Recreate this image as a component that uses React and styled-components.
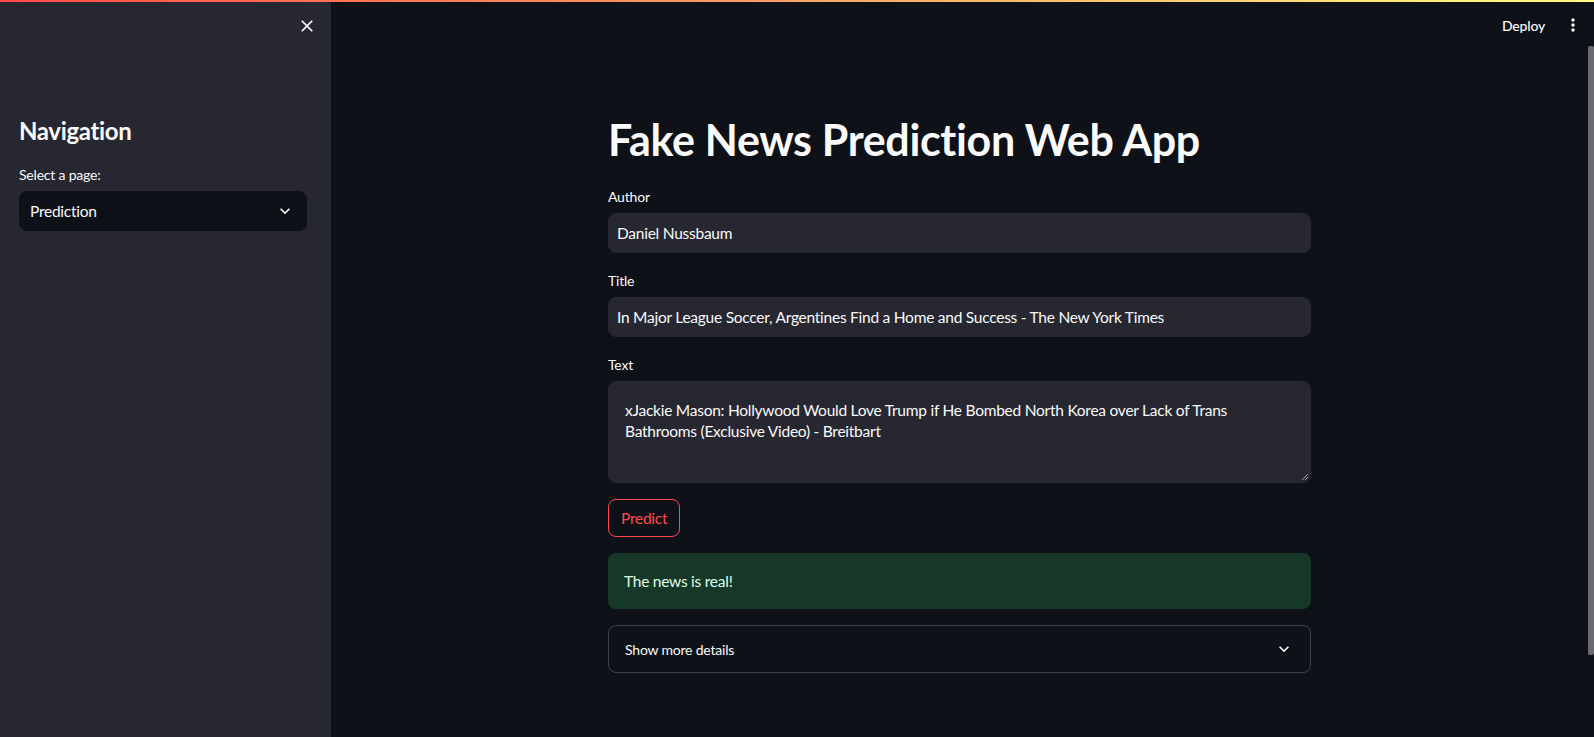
import React from "react";
import styled, { createGlobalStyle } from "styled-components";

const GlobalStyle = createGlobalStyle`
  html, body {
    margin: 0;
    padding: 0;
    height: 100%;
    overflow: hidden;
    background: #0e1117;
  }
  body {
    font-family: "Source Sans Pro", Lato, "Noto Sans", sans-serif;
    color: #fafafa;
    -webkit-font-smoothing: antialiased;
  }
  #root { height: 100%; }
  *, *::before, *::after { box-sizing: border-box; }
`;

const bodyText = `
  font-size: 15.5px;
  letter-spacing: -0.25px;
`;

const smallText = `
  font-size: 14px;
  letter-spacing: -0.2px;
`;

const Shell = styled.div`
  display: flex;
  flex-direction: column;
  height: 100vh;
`;

const Decoration = styled.div`
  flex: 0 0 2px;
  height: 2px;
  background: linear-gradient(90deg, #ff4b4b 0%, #fffd80 100%);
`;

const Body = styled.div`
  flex: 1;
  display: flex;
  min-height: 0;
`;

const Sidebar = styled.aside`
  flex: 0 0 331px;
  width: 331px;
  background: #262730;
  display: flex;
  flex-direction: column;
  padding: 0 24px 0 19px;
`;

const SidebarTop = styled.div`
  height: 48px;
  display: flex;
  align-items: center;
  justify-content: flex-end;
  margin-right: -10px;
`;

const IconButton = styled.button`
  border: none;
  background: transparent;
  padding: 0;
  display: flex;
  align-items: center;
  justify-content: center;
  color: #fafafa;
  cursor: pointer;
`;

const SideHeading = styled.h2`
  margin: 66px 0 0;
  font-size: 24px;
  line-height: 29px;
  font-weight: 700;
  letter-spacing: -0.35px;
  color: #fafafa;
`;

const Label = styled.div`
  ${smallText}
  line-height: 24px;
  color: #fafafa;
  margin-bottom: 4px;
  margin-top: ${(p) => p.$top || 0}px;
`;

const SelectBox = styled.div`
  height: 40px;
  border-radius: 8px;
  background: #0e1117;
  border: 1px solid #0e1117;
  display: flex;
  align-items: center;
  justify-content: space-between;
  padding: 0 11px 0 10px;
  ${bodyText}
`;

const Main = styled.main`
  flex: 1;
  display: flex;
  min-width: 0;
`;

const MainInner = styled.div`
  flex: 1;
  display: flex;
  flex-direction: column;
  min-width: 0;
`;

const Header = styled.header`
  height: 46px;
  display: flex;
  align-items: center;
  justify-content: flex-end;
  gap: 18px;
  padding-right: 5px;
`;

const DeployButton = styled.button`
  border: none;
  background: transparent;
  padding: 0;
  font-family: inherit;
  ${smallText}
  font-weight: 500;
  color: #fafafa;
  cursor: pointer;
`;

const ScrollTrack = styled.div`
  flex: 0 0 6px;
  width: 6px;
  padding-top: 44px;
`;

const ScrollThumb = styled.div`
  height: 609px;
  width: 6px;
  background: #6b6b6f;
  border-radius: 2px;
`;

const Content = styled.div`
  width: 703px;
  margin: 0 auto;
  padding-top: 66px;
  display: flex;
  flex-direction: column;
`;

const Title = styled.h1`
  margin: 0 0 19px;
  font-size: 43px;
  line-height: 52px;
  font-weight: 700;
  color: #fafafa;
  letter-spacing: -0.35px;
`;

const Stack = styled.div`
  display: flex;
  flex-direction: column;
  gap: 16px;
`;

const Field = styled.div`
  display: flex;
  flex-direction: column;
`;

const InputBox = styled.div`
  height: 40px;
  border-radius: 8px;
  background: #262730;
  border: 1px solid #262730;
  display: flex;
  align-items: center;
  padding: 0 8px;
  ${bodyText}
  color: #fafafa;
  white-space: nowrap;
  overflow: hidden;
`;

const TextAreaBox = styled.div`
  position: relative;
  height: 102px;
  border-radius: 8px;
  background: #262730;
  border: 1px solid #262730;
  padding: 18px 16px 0 16px;
  ${bodyText}
  line-height: 21px;
  color: #fafafa;
`;

const ResizeGrip = styled.svg`
  position: absolute;
  right: 1px;
  bottom: 1px;
`;

const PredictButton = styled.button`
  align-self: flex-start;
  height: 38px;
  padding: 0 12px;
  border-radius: 8px;
  border: 1px solid #ff4b4b;
  background: #0e1117;
  color: #ff4b4b;
  font-family: inherit;
  ${bodyText}
  cursor: pointer;
`;

const Alert = styled.div`
  height: 56px;
  border-radius: 8px;
  background: #173828;
  color: #dffde9;
  display: flex;
  align-items: center;
  padding: 0 16px;
  ${bodyText}
`;

const Expander = styled.div`
  height: 48px;
  border-radius: 8px;
  border: 1px solid rgba(250, 250, 250, 0.2);
  display: flex;
  align-items: center;
  justify-content: space-between;
  padding: 0 16px 0 16px;
  ${smallText}
  color: #fafafa;
`;

const ChevronDown = ({ size = 20 }) => (
  <svg width={size} height={size} viewBox="0 0 24 24" fill="#fafafa">
    <path d="M16.59 8.59 12 13.17 7.41 8.59 6 10l6 6 6-6z" />
  </svg>
);

const CloseIcon = () => (
  <svg width="20" height="20" viewBox="0 0 24 24" fill="#fafafa">
    <path d="M19 6.41 17.59 5 12 10.59 6.41 5 5 6.41 10.59 12 5 17.59 6.41 19 12 13.41 17.59 19 19 17.59 13.41 12z" />
  </svg>
);

const MoreVert = () => (
  <svg width="20" height="20" viewBox="0 0 24 24" fill="#fafafa">
    <path d="M12 8c1.1 0 2-.9 2-2s-.9-2-2-2-2 .9-2 2 .9 2 2 2zm0 2c-1.1 0-2 .9-2 2s.9 2 2 2 2-.9 2-2-.9-2-2-2zm0 6c-1.1 0-2 .9-2 2s.9 2 2 2 2-.9 2-2-.9-2-2-2z" />
  </svg>
);

export default function App() {
  return (
    <>
      <GlobalStyle />
      <Shell>
        <Decoration />
        <Body>
          <Sidebar>
            <SidebarTop>
              <IconButton aria-label="Close sidebar">
                <CloseIcon />
              </IconButton>
            </SidebarTop>
            <SideHeading>Navigation</SideHeading>
            <Label $top={18}>Select a page:</Label>
            <SelectBox>
              <span>Prediction</span>
              <ChevronDown />
            </SelectBox>
          </Sidebar>
          <Main>
            <MainInner>
              <Header>
                <DeployButton>Deploy</DeployButton>
                <IconButton aria-label="Main menu">
                  <MoreVert />
                </IconButton>
              </Header>
              <Content>
                <Title>Fake News Prediction Web App</Title>
                <Stack>
                  <Field>
                    <Label>Author</Label>
                    <InputBox>Daniel Nussbaum</InputBox>
                  </Field>
                  <Field>
                    <Label>Title</Label>
                    <InputBox>
                      In Major League Soccer, Argentines Find a Home and Success - The New York Times
                    </InputBox>
                  </Field>
                  <Field>
                    <Label>Text</Label>
                    <TextAreaBox>
                      xJackie Mason: Hollywood Would Love Trump if He Bombed North Korea over Lack of Trans
                      Bathrooms (Exclusive Video) - Breitbart
                      <ResizeGrip width="9" height="9" viewBox="0 0 9 9">
                        <path d="M8 2 2 8M8 5 5 8" stroke="#a0a0a8" strokeWidth="1" />
                      </ResizeGrip>
                    </TextAreaBox>
                  </Field>
                  <PredictButton>Predict</PredictButton>
                  <Alert>The news is real!</Alert>
                  <Expander>
                    <span>Show more details</span>
                    <ChevronDown />
                  </Expander>
                </Stack>
              </Content>
            </MainInner>
            <ScrollTrack>
              <ScrollThumb />
            </ScrollTrack>
          </Main>
        </Body>
      </Shell>
    </>
  );
}
